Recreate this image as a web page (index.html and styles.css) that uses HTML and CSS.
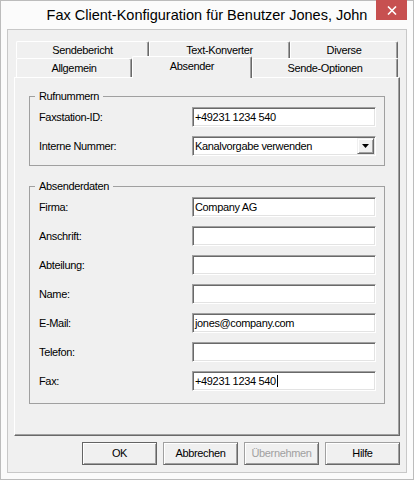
FILE: index.html
```html
<!DOCTYPE html>
<html lang="de">
<head>
<meta charset="utf-8">
<title>Fax Client-Konfiguration</title>
<link rel="stylesheet" href="styles.css">
</head>
<body>
<div class="window">
  <div class="titlebar">
    <span class="title">Fax Client-Konfiguration für Benutzer Jones, John</span>
    <div class="close"><svg width="10" height="9" viewBox="0 0 10 9"><path d="M1 0.5 L9 8.5 M9 0.5 L1 8.5" stroke="#fff" stroke-width="1.6" fill="none"/></svg></div>
  </div>
  <div class="client">
    <div class="tabctl">
      <div class="tabrow row1">
        <div class="tab">Sendebericht</div>
        <div class="tab">Text-Konverter</div>
        <div class="tab">Diverse</div>
      </div>
      <div class="tabrow row2">
        <div class="tab">Allgemein</div>
        <div class="tab selected">Absender</div>
        <div class="tab">Sende-Optionen</div>
      </div>
      <div class="panel">
        <fieldset class="group">
          <legend>Rufnummern</legend>
          <div class="form">
            <label>Faxstation-ID:</label>
            <div class="edit">+49231 1234 540</div>
            <label>Interne Nummer:</label>
            <div class="combo">
              <span class="combo-text">Kanalvorgabe verwenden</span>
              <span class="drop"><svg width="7" height="4" viewBox="0 0 7 4"><path d="M0 0 H7 L3.5 4 Z" fill="#000"/></svg></span>
            </div>
          </div>
        </fieldset>
        <fieldset class="group">
          <legend>Absenderdaten</legend>
          <div class="form">
            <label>Firma:</label>
            <div class="edit">Company AG</div>
            <label>Anschrift:</label>
            <div class="edit"></div>
            <label>Abteilung:</label>
            <div class="edit"></div>
            <label>Name:</label>
            <div class="edit"></div>
            <label>E-Mail:</label>
            <div class="edit">jones@company.com</div>
            <label>Telefon:</label>
            <div class="edit"></div>
            <label>Fax:</label>
            <div class="edit">+49231 1234 540<span class="caret"></span></div>
          </div>
        </fieldset>
      </div>
    </div>
    <div class="buttons">
      <div class="btn default">OK</div>
      <div class="btn">Abbrechen</div>
      <div class="btn disabled">Übernehmen</div>
      <div class="btn">Hilfe</div>
    </div>
  </div>
</div>
</body>
</html>
```
FILE: styles.css
```css
* { box-sizing: border-box; }

body {
  margin: 0;
  background: #fff;
  font-family: "Liberation Sans", Arial, sans-serif;
  font-size: 11px;
  letter-spacing: -0.35px;
  color: #000;
}

.window {
  position: relative;
  width: 414px;
  height: 480px;
  border: 1px solid #bcbcbc;
  background: #fbfbfb;
  padding: 0 6px 6px;
  display: flex;
  flex-direction: column;
}

.titlebar {
  height: 28px;
  flex: none;
  margin: 0 -6px;
  text-align: center;
}

.title {
  font-family: "Liberation Sans", Arial, sans-serif;
  font-size: 14.5px;
  letter-spacing: 0;
  line-height: 28px;
  color: #000;
}

.close {
  position: absolute;
  top: -1px;
  right: 6px;
  width: 31px;
  height: 20px;
  background: #c75050;
  display: flex;
  align-items: center;
  justify-content: center;
}

.client {
  flex: 1;
  border: 1px solid #c8c8c8;
  background: #f0f0f0;
  padding: 11px 6px 0;
  display: flex;
  flex-direction: column;
}

.tabrow {
  display: grid;
  margin: 0 2px;
}

.row1 {
  grid-template-columns: 133px 141px 1fr;
  height: 17px;
}

.row2 {
  grid-template-columns: 116px 120px 1fr;
  height: 19px;
}

.tab {
  background: #f0f0f0;
  border-top: 1px solid #fff;
  border-left: 1px solid #fff;
  border-right: 1px solid #696969;
  box-shadow: inset -1px 0 #a0a0a0;
  border-top-left-radius: 2px;
  border-top-right-radius: 2px;
  text-align: center;
  white-space: nowrap;
}

.row1 .tab { line-height: 16px; }
.row2 .tab { line-height: 18px; }

.tab.selected {
  position: relative;
  z-index: 1;
  margin-top: -2px;
  margin-bottom: -1px;
}

.panel {
  height: 359px;
  border: 1px solid;
  border-color: #fff #696969 #696969 #fff;
  box-shadow: inset -1px -1px #a0a0a0;
  padding: 11px 14px 0 14px;
}

.group {
  margin: 0;
  padding: 4px 8px 9px 9px;
  border: 1px solid #a0a0a0;
  min-width: 0;
}

.group + .group {
  margin-top: 13px;
  padding-bottom: 12px;
}

.group legend {
  padding: 0 4px;
  margin-left: -4px;
  line-height: 14px;
}

.form {
  display: grid;
  grid-template-columns: 153px 184px;
  row-gap: 9px;
  align-items: center;
}

.form label {
  line-height: 20px;
  white-space: nowrap;
}

.edit,
.combo {
  height: 20px;
  background: #fff;
  border: 1px solid;
  border-color: #a0a0a0 #fff #fff #a0a0a0;
  box-shadow: inset 1px 1px #696969, inset -1px -1px #e3e3e3;
}

.edit {
  padding: 0 2px;
  line-height: 18px;
  white-space: nowrap;
  overflow: hidden;
}

.combo {
  display: flex;
}

.combo-text {
  flex: 1;
  padding-left: 2px;
  line-height: 18px;
  white-space: nowrap;
}

.drop {
  width: 17px;
  margin: 1px;
  background: #f0f0f0;
  border: 1px solid;
  border-color: #f0f0f0 #696969 #696969 #f0f0f0;
  box-shadow: inset 1px 1px #fff, inset -1px -1px #a0a0a0;
  display: flex;
  align-items: center;
  justify-content: center;
}

.caret {
  display: inline-block;
  width: 1px;
  height: 12px;
  background: #000;
  vertical-align: -2px;
  margin-left: 1px;
}

.buttons {
  display: flex;
  justify-content: flex-end;
  gap: 6px;
  margin-top: 6px;
}

.btn {
  width: 75px;
  height: 23px;
  border: 1px solid;
  border-color: #a0a0a0 #696969 #696969 #a0a0a0;
  box-shadow: inset 1px 1px #fff, inset -1px -1px #a0a0a0;
  background: #f0f0f0;
  text-align: center;
  line-height: 21px;
}

.btn.default {
  border-color: #646464;
  box-shadow: inset 1px 1px #fff, inset -1px -1px #a0a0a0;
}

.btn.disabled {
  color: #a0a0a0;
}
```
